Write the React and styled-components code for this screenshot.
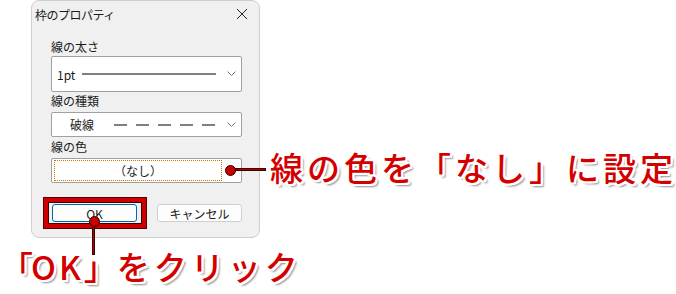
import styled, { createGlobalStyle } from 'styled-components';

const GlobalStyle = createGlobalStyle`
  html, body {
    margin: 0;
    padding: 0;
    background: #ffffff;
  }
  body {
    font-family: "Noto Sans CJK JP", "Noto Sans", sans-serif;
  }
`;

const UI_FONT = `"Noto Sans CJK JP", "Noto Sans", sans-serif`;

const Page = styled.div`
  position: relative;
  width: 676px;
  height: 294px;
  overflow: hidden;
  background: #fff;
`;

const TopRow = styled.div`
  display: flex;
  align-items: flex-start;
`;

const Dialog = styled.div`
  position: relative;
  margin-left: 31px;
  width: 230px;
  height: 238px;
  box-sizing: border-box;
  background: #f0f0f0;
  border: 1px solid #cfcfcf;
  border-radius: 8px;
  display: flex;
  flex-direction: column;
  font-family: ${UI_FONT};
  color: #1a1a1a;
`;

const TitleBar = styled.div`
  height: 26px;
  display: flex;
  align-items: center;
  justify-content: space-between;
  padding: 0 11px 0 3px;
  font-size: 12px;
  letter-spacing: -0.5px;
`;

const Body = styled.div`
  padding: 13px 17px 0 19px;
  display: flex;
  flex-direction: column;
`;

const Label = styled.div`
  font-size: 12px;
  line-height: 14px;
  height: 14px;
  margin: ${p => p.$top || 0}px 0 ${p => p.$bottom || 0}px;
`;

const Select = styled.div`
  position: relative;
  height: ${p => p.$h}px;
  box-sizing: border-box;
  background: #fff;
  border: 1px solid #a0a0a0;
  border-radius: 2px;
  display: flex;
  align-items: center;
  padding-left: ${p => p.$pad}px;
  font-size: 12px;
`;

const Chevron = styled.svg`
  position: absolute;
  right: 5px;
  top: 50%;
  margin-top: -3px;
`;

const LineSample = styled.svg`
  margin-left: ${p => p.$gap}px;
  display: block;
`;

const ColorBox = styled.div`
  position: relative;
  height: 25px;
  box-sizing: border-box;
  background: #fff;
  border: 1px solid #a0a0a0;
  border-radius: 2px;
  padding: 1px 19px 0 2px;
`;

const ColorButton = styled.div`
  height: 21px;
  box-sizing: border-box;
  border: 1px dotted #d07000;
  display: flex;
  align-items: center;
  justify-content: center;
  font-size: 12px;
`;

const ButtonRow = styled.div`
  display: flex;
  gap: 20px;
  margin-top: 21px;
  padding-left: 1px;
`;

const Button = styled.div`
  position: relative;
  width: 85px;
  height: 18px;
  box-sizing: border-box;
  background: #fdfdfd;
  border: 1px solid ${p => (p.$primary ? '#0067c0' : '#d0d0d0')};
  border-radius: 3px;
  display: flex;
  align-items: center;
  justify-content: center;
  font-size: 12px;
`;

const Highlight = styled.div`
  position: absolute;
  left: -9px;
  top: -7px;
  width: 102px;
  height: 30px;
  box-sizing: border-box;
  border: 4px solid #cc0000;
  box-shadow: 0 0 0 1px #5a0000, inset 0 0 0 1px #3a0000;
`;

const Dot = styled.div`
  position: absolute;
  width: 9px;
  height: 9px;
  border-radius: 50%;
  background: #c80000;
  border: 1px solid #3a0000;
  left: ${p => p.$x}px;
  top: ${p => p.$y}px;
  z-index: 2;
`;

const Leader = styled.div`
  position: absolute;
  background: #b00000;
  border: 1px solid #3a0000;
  left: ${p => p.$x}px;
  top: ${p => p.$y}px;
  width: ${p => p.$w}px;
  height: ${p => p.$h}px;
  z-index: 1;
`;

const Callout = styled.div`
  font-family: "Noto Sans CJK JP", sans-serif;
  font-weight: 500;
  font-size: 33px;
  line-height: 1;
  letter-spacing: 4px;
  color: #d40000;
  white-space: nowrap;
  margin: ${p => p.$m};
  text-shadow:
    2px 0 0 #fff, -2px 0 0 #fff, 0 2px 0 #fff, 0 -2px 0 #fff,
    2px 2px 0 #fff, -2px -2px 0 #fff, 2px -2px 0 #fff, -2px 2px 0 #fff,
    3px 3px 2px rgba(0, 0, 0, 0.45);
`;

const Tight = styled.span`
  letter-spacing: ${p => p.$ls}px;
`;

const CloseIcon = () => (
  <svg width="12" height="12" viewBox="0 0 12 12">
    <path d="M1 1 L11 11 M11 1 L1 11" stroke="#222" strokeWidth="1" />
  </svg>
);

const ChevronIcon = () => (
  <Chevron width="9" height="6" viewBox="0 0 9 6">
    <path d="M0.5 0.5 L4.5 4.5 L8.5 0.5" stroke="#777" strokeWidth="1" fill="none" />
  </Chevron>
);

const App = () => (
  <Page>
    <GlobalStyle />
    <TopRow>
      <Dialog>
        <TitleBar>
          <span>枠のプロパティ</span>
          <CloseIcon />
        </TitleBar>
        <Body>
          <Label $bottom={2}>線の太さ</Label>
          <Select $h={36} $pad={5}>
            1pt
            <LineSample $gap={7} width="134" height="2">
              <line x1="0" y1="1" x2="134" y2="1" stroke="#000" strokeWidth="1.2" />
            </LineSample>
            <ChevronIcon />
          </Select>
          <Label $top={2} $bottom={4}>線の種類</Label>
          <Select $h={25} $pad={18}>
            破線
            <LineSample $gap={20} width="106" height="2">
              <line x1="0" y1="1" x2="106" y2="1" stroke="#000" strokeWidth="1.2" strokeDasharray="13 9" />
            </LineSample>
            <ChevronIcon />
          </Select>
          <Label $top={3} $bottom={4}>線の色</Label>
          <ColorBox>
            <ColorButton>（なし）</ColorButton>
            <Dot $x={173} $y={6} />
            <Leader $x={178} $y={9} $w={34} $h={1} />
          </ColorBox>
          <ButtonRow>
            <Button $primary>
              OK
              <Highlight />
              <Dot $x={36} $y={11} />
              <Leader $x={39} $y={15} $w={1} $h={33} />
            </Button>
            <Button>キャンセル</Button>
          </ButtonRow>
        </Body>
      </Dialog>
      <Callout $m="151px 0 0 10px">線の色を「なし」に設定</Callout>
    </TopRow>
    <Callout $m="12px 0 0 0">
      <Tight $ls={-2}>「</Tight>
      <Tight $ls={3}>OK</Tight>
      <Tight $ls={0}>」</Tight>をクリック
    </Callout>
  </Page>
);

export default App;
